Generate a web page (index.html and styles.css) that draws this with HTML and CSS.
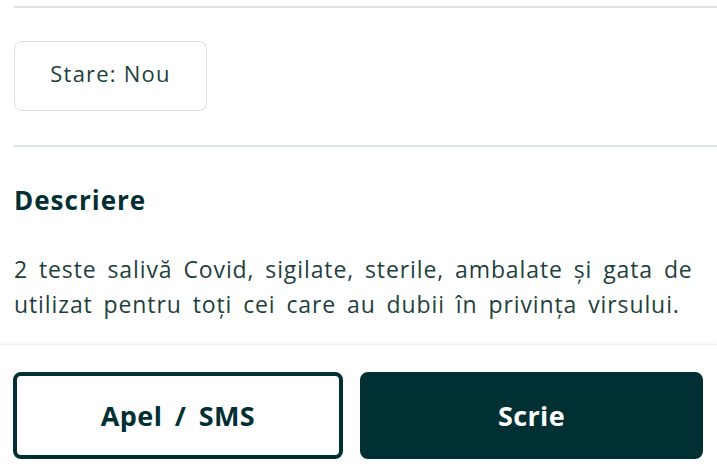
FILE: index.html
```html
<!DOCTYPE html>
<html lang="ro">
<head>
    <meta charset="UTF-8">
    <meta name="viewport" content="width=device-width, initial-scale=1.0">
    <title>Anunț</title>
    <link rel="stylesheet" href="styles.css">
</head>
<body>
    <div class="details">
        <hr class="divider">
        <div class="tags">
            <span class="tag">Stare: Nou</span>
        </div>
        <hr class="divider">
        <h2 class="section-title">Descriere</h2>
        <p class="description">2 teste salivă Covid, sigilate, sterile, ambalate şi gata de utilizat pentru toți cei care au dubii în privința virsului.</p>
    </div>
    <div class="action-bar">
        <button class="btn btn-outline">Apel / SMS</button>
        <button class="btn btn-solid">Scrie</button>
    </div>
</body>
</html>
```

FILE: styles.css
```css
body {
    margin: 0;
    font-family: "Open Sans", Lato, sans-serif;
    background-color: #fff;
    color: #002f34;
    width: 717px;
    height: 474px;
    overflow: hidden;
}
.details {
    padding: 6px 0 0 14px;
}
.divider {
    border: none;
    height: 2px;
    background-color: #dde4e4;
    margin: 0;
}
.tags {
    padding: 33px 0 34px;
    display: flex;
}
.tag {
    display: inline-flex;
    align-items: center;
    justify-content: center;
    box-sizing: border-box;
    width: 193px;
    height: 70px;
    padding-bottom: 6px;
    border: 1px solid #d8dfe0;
    border-radius: 8px;
    font-size: 22px;
    letter-spacing: 1.2px;
    color: #1d3f3d;
}
.section-title {
    font-size: 26px;
    font-weight: 700;
    letter-spacing: 1px;
    margin: 0;
    padding-top: 36px;
    line-height: 34px;
}
.description {
    margin: 0;
    padding: 35px 10px 0 0;
    font-size: 23px;
    letter-spacing: 0.9px;
    word-spacing: 4px;
    line-height: 35px;
    color: #1f3f3e;
}
.action-bar {
    margin-top: 22px;
    border-top: 1px solid #eef1f1;
    box-shadow: 0 -1px 3px rgba(0, 0, 0, 0.04);
    padding: 27px 14px 0 13px;
    display: flex;
    gap: 17px;
}
.btn {
    height: 87px;
    border-radius: 8px;
    font-family: "Open Sans", sans-serif;
    font-size: 27px;
    font-weight: 700;
    letter-spacing: 0.4px;
    word-spacing: 5px;
    cursor: pointer;
}
.btn-outline {
    width: 330px;
    background-color: #fff;
    border: 4px solid #002f34;
    color: #002f34;
}
.btn-solid {
    flex: 1;
    background-color: #002f34;
    border: 4px solid #002f34;
    color: #fff;
}
```
